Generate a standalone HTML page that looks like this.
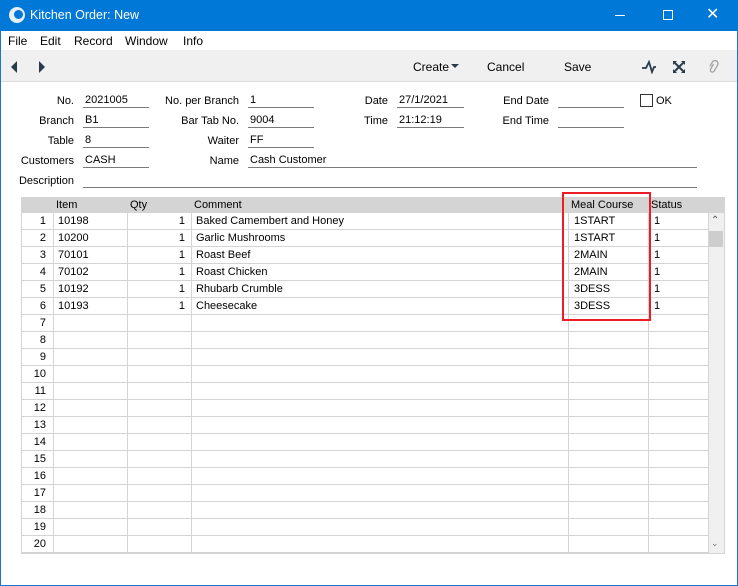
<!DOCTYPE html>
<html><head><style>
*{margin:0;padding:0;box-sizing:border-box}
body{width:738px;height:586px;overflow:hidden;background:#fff;font-family:"Liberation Sans",sans-serif;font-size:11px;color:#000;position:relative}
.a{position:absolute;white-space:nowrap}
.lbl{text-align:right}
.fld{border-bottom:1px solid #7a7a7a;height:14px;padding-left:2px;line-height:13px}
.gl{position:absolute;background:#d4d4d4}
</style></head><body>
<div class="a" style="left:0;top:0;width:738px;height:586px;border:1px solid #1a76d0;border-top:none"></div>
<div class="a" style="left:0;top:0;width:738px;height:31px;background:#0078d7"></div>
<div class="a" style="left:9px;top:7px;width:16px;height:16px;border-radius:50%;background:#e8eef5"></div>
<div class="a" style="left:14px;top:10px;width:9px;height:9px;border-radius:50%;background:#0078d7"></div>
<div class="a" style="left:30px;top:8px;color:#fff;font-size:12.5px">Kitchen Order: New</div>
<div class="a" style="left:615px;top:15px;width:10px;height:1px;background:#fff"></div>
<div class="a" style="left:663px;top:10px;width:10px;height:10px;border:1px solid #fff"></div>
<div class="a" style="left:706px;top:4px;color:#fff;font-size:16px">✕</div>
<div class="a" style="left:8px;top:34px;font-size:12px">File</div>
<div class="a" style="left:40px;top:34px;font-size:12px">Edit</div>
<div class="a" style="left:74px;top:34px;font-size:12px">Record</div>
<div class="a" style="left:125px;top:34px;font-size:12px">Window</div>
<div class="a" style="left:183px;top:34px;font-size:12px">Info</div>
<div class="a" style="left:1px;top:50px;width:736px;height:32px;background:#f0f0f0;border-bottom:1px solid #dcdcdc"></div>
<svg class="a" style="left:10px;top:60px" width="40" height="14"><polygon points="7,1 7,13 1,7" fill="#2b3a4a"/><polygon points="29,1 29,13 35,7" fill="#2b3a4a"/></svg>
<div class="a" style="left:413px;top:60px;font-size:12px">Create</div>
<svg class="a" style="left:451px;top:64px" width="9" height="5"><polygon points="0,0 8,0 4,4" fill="#2b3a4a"/></svg>
<div class="a" style="left:487px;top:60px;font-size:12px">Cancel</div>
<div class="a" style="left:564px;top:60px;font-size:12px">Save</div>
<svg class="a" style="left:641px;top:60px" width="16" height="14"><polyline points="1,8 5,8 8,2 11,12 13,7 15,7" fill="none" stroke="#2b3a4a" stroke-width="1.8"/></svg>
<svg class="a" style="left:672px;top:60px" width="14" height="14"><path d="M1 1L5 1L1 5Z M13 1L9 1L13 5Z M1 13L5 13L1 9Z M13 13L9 13L13 9Z" fill="#2b3a4a"/><path d="M3 3L11 11M11 3L3 11" stroke="#2b3a4a" stroke-width="2"/></svg>
<svg class="a" style="left:706px;top:59px" width="14" height="16"><path d="M4 9V4a3 3 0 0 1 6 0v7a2 2 0 0 1-4 0V5" fill="none" stroke="#a0a0a0" stroke-width="1.3" transform="rotate(30 7 8)"/></svg>

<div class="a lbl" style="left:20px;top:95px;width:54px">No.</div>
<div class="a fld" style="left:83px;top:94px;width:66px">2021005</div>
<div class="a lbl" style="left:150px;top:95px;width:89px">No. per Branch</div>
<div class="a fld" style="left:248px;top:94px;width:66px">1</div>
<div class="a lbl" style="left:340px;top:95px;width:48px">Date</div>
<div class="a fld" style="left:397px;top:94px;width:67px">27/1/2021</div>
<div class="a lbl" style="left:480px;top:95px;width:69px">End Date</div>
<div class="a fld" style="left:558px;top:94px;width:66px"></div>
<div class="a" style="left:640px;top:94px;width:13px;height:13px;border:1px solid #333"></div>
<div class="a" style="left:656px;top:95px">OK</div>

<div class="a lbl" style="left:20px;top:115px;width:54px">Branch</div>
<div class="a fld" style="left:83px;top:114px;width:66px">B1</div>
<div class="a lbl" style="left:150px;top:115px;width:89px">Bar Tab No.</div>
<div class="a fld" style="left:248px;top:114px;width:66px">9004</div>
<div class="a lbl" style="left:340px;top:115px;width:48px">Time</div>
<div class="a fld" style="left:397px;top:114px;width:67px">21:12:19</div>
<div class="a lbl" style="left:480px;top:115px;width:69px">End Time</div>
<div class="a fld" style="left:558px;top:114px;width:66px"></div>

<div class="a lbl" style="left:20px;top:135px;width:54px">Table</div>
<div class="a fld" style="left:83px;top:134px;width:66px">8</div>
<div class="a lbl" style="left:150px;top:135px;width:89px">Waiter</div>
<div class="a fld" style="left:248px;top:134px;width:66px">FF</div>

<div class="a lbl" style="left:10px;top:155px;width:64px">Customers</div>
<div class="a fld" style="left:83px;top:154px;width:66px">CASH</div>
<div class="a lbl" style="left:150px;top:155px;width:89px">Name</div>
<div class="a fld" style="left:248px;top:154px;width:449px">Cash Customer</div>
<div class="a lbl" style="left:10px;top:175px;width:64px">Description</div>
<div class="a fld" style="left:83px;top:174px;width:614px"></div>

<div class="a" style="left:21px;top:197px;width:704px;height:357px;border:1px solid #d4d4d4;background:#fff"></div>
<div class="a" style="left:22px;top:197px;width:702px;height:16px;background:#d4d4d4"></div>
<div class="a" style="left:56px;top:199px">Item</div>
<div class="a" style="left:130px;top:199px">Qty</div>
<div class="a" style="left:194px;top:199px">Comment</div>
<div class="a" style="left:571px;top:199px">Meal Course</div>
<div class="a" style="left:651px;top:199px">Status</div>
<div class="a" style="left:708px;top:213px;width:16px;height:340px;background:#f0f0f0"></div>
<div class="a" style="left:709px;top:231px;width:14px;height:16px;background:#cdcdcd"></div>
<div class="a" style="left:711px;top:215px;font-size:10px;color:#555">⌃</div>
<div class="a" style="left:711px;top:538px;font-size:9px;color:#777">⌄</div>
<div id="g"></div>
<div class="a" style="left:562px;top:192px;width:89px;height:129px;border:2px solid #ee1c25"></div>
<script>
var g=document.getElementById('g'),h='';
var cols=[53,127,191,568,648,708];
for(var c of cols)h+='<div class="gl" style="left:'+c+'px;top:213px;width:1px;height:340px"></div>';
var d=[["10198","1","Baked Camembert and Honey","1START","1"],["10200","1","Garlic Mushrooms","1START","1"],["70101","1","Roast Beef","2MAIN","1"],["70102","1","Roast Chicken","2MAIN","1"],["10192","1","Rhubarb Crumble","3DESS","1"],["10193","1","Cheesecake","3DESS","1"]];
for(var i=0;i<20;i++){var y=213+i*17;
h+='<div class="gl" style="left:22px;top:'+(y+16)+'px;width:686px;height:1px"></div>';
h+='<div class="a" style="left:22px;top:'+(y+2)+'px;width:24px;text-align:right">'+(i+1)+'</div>';
if(d[i]){var r=d[i];
h+='<div class="a" style="left:58px;top:'+(y+2)+'px">'+r[0]+'</div>';
h+='<div class="a" style="left:127px;top:'+(y+2)+'px;width:58px;text-align:right">'+r[1]+'</div>';
h+='<div class="a" style="left:196px;top:'+(y+2)+'px">'+r[2]+'</div>';
h+='<div class="a" style="left:574px;top:'+(y+2)+'px">'+r[3]+'</div>';
h+='<div class="a" style="left:654px;top:'+(y+2)+'px">'+r[4]+'</div>';}}
g.innerHTML=h;
</script>
</body></html>
